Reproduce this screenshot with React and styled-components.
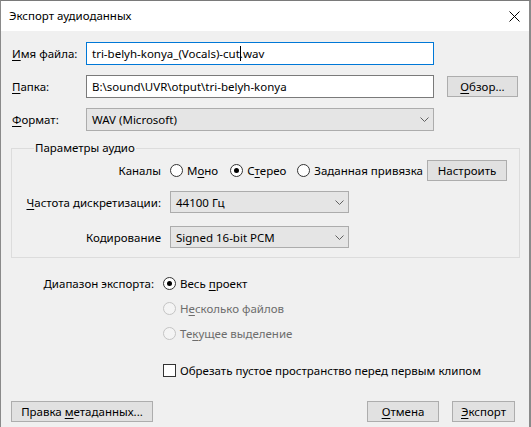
import React from 'react'
import styled, { createGlobalStyle } from 'styled-components'

const GlobalStyle = createGlobalStyle`
  html, body {
    margin: 0;
    padding: 0;
    background: #4a4a4a;
  }
`;

const uiFont = `"Noto Sans", "Open Sans", sans-serif`;

const Window = styled.div`
  box-sizing: border-box;
  width: 531px;
  height: 427px;
  display: flex;
  flex-direction: column;
  background: #f0f0f0;
  border-top: 1px solid #7a7a7a;
  border-left: 1px solid #8a8a8a;
  border-right: 2px solid #8a8a8a;
  font-family: ${uiFont};
  font-size: 11.5px;
  color: #000;
  overflow: hidden;
`;

const TitleBar = styled.div`
  height: 30px;
  flex: none;
  display: flex;
  align-items: center;
  justify-content: space-between;
  padding: 0 9px 0 8px;
  background: #fff;
`;

const Title = styled.span`
  font-size: 11.5px;
  line-height: 16px;
`;

const Content = styled.div`
  flex: 1;
  display: flex;
  flex-direction: column;
  padding: 11px 9px 5px 10px;
`;

const FieldRow = styled.div`
  display: grid;
  grid-template-columns: 62px 348px 71px;
  column-gap: 13px;
  align-items: center;
  height: 23px;
  margin-bottom: 10px;
`;

const Label = styled.span`
  padding-left: 1px;
  white-space: nowrap;
`;

const Key = styled.u`
  text-decoration-thickness: 1px;
  text-underline-offset: 2px;
`;

const TextBox = styled.div`
  box-sizing: border-box;
  height: 23px;
  display: flex;
  align-items: center;
  padding: 0 5px;
  background: #fff;
  border: 1px solid ${p => (p.$focused ? '#0078d7' : '#7a7a7a')};
  white-space: nowrap;
`;

const Caret = styled.span`
  display: inline-block;
  width: 1px;
  height: 15px;
  margin: 0 -1px 0 0;
  background: #000;
  vertical-align: middle;
`;

const Combo = styled.div`
  box-sizing: border-box;
  width: ${p => p.$width || 'auto'};
  height: ${p => p.$height || '23px'};
  margin-top: ${p => p.$top || '0'};
  display: flex;
  align-items: center;
  justify-content: space-between;
  padding: 0 4px 0 5px;
  background: #e5e5e5;
  border: 1px solid #acacac;
  white-space: nowrap;
`;

const Chevron = () => (
  <svg width="9" height="5" viewBox="0 0 9 5">
    <path d="M0.5 0.5 L4.5 4.5 L8.5 0.5" fill="none" stroke="#606060" strokeWidth="1" />
  </svg>
);

const Button = styled.button`
  box-sizing: border-box;
  width: ${p => p.$width};
  height: 21px;
  padding: 0;
  background: #e1e1e1;
  border: 1px solid #adadad;
  font-family: ${uiFont};
  font-size: 11.5px;
  color: #000;
  white-space: nowrap;
`;

const GroupBox = styled.fieldset`
  margin: -1px 0 0 0;
  padding: 3px 12px 9px 15px;
  border: 1px solid #dcdcdc;
  min-width: 0;
`;

const Legend = styled.legend`
  padding: 0 1px;
  margin-left: 7px;
  line-height: 16px;
`;

const GroupGrid = styled.div`
  display: grid;
  grid-template-columns: 134px minmax(0, 1fr);
  column-gap: 9px;
  row-gap: 10px;
  align-items: center;
  justify-items: start;
`;

const RightLabel = styled.span`
  justify-self: end;
  white-space: nowrap;
  margin-top: ${p => p.$top || '0'};
`;

const ChannelRow = styled.div`
  justify-self: stretch;
  display: flex;
  align-items: center;
  height: 22px;
`;

const RadioItem = styled.span`
  display: inline-flex;
  align-items: center;
  gap: 4px;
  margin-right: ${p => p.$gap || '0'};
  white-space: nowrap;
  color: ${p => (p.$disabled ? '#6d6d6d' : '#000')};
`;

const Circle = styled.span`
  box-sizing: border-box;
  width: 13px;
  height: 13px;
  border-radius: 50%;
  border: 1px solid ${p => (p.$disabled ? '#c4c4c4' : '#333')};
  background: ${p => (p.$disabled ? '#f4f4f4' : '#fff')};
  display: flex;
  align-items: center;
  justify-content: center;

  &::after {
    content: '';
    display: ${p => (p.$checked ? 'block' : 'none')};
    width: 5px;
    height: 5px;
    border-radius: 50%;
    background: #000;
  }
`;

const Radio = ({ checked, disabled, gap, children }) => (
  <RadioItem $disabled={disabled} $gap={gap}>
    <Circle $checked={checked} $disabled={disabled} />
    <span>{children}</span>
  </RadioItem>
);

const Spacer = styled.span`
  flex: 1;
`;

const RangeGrid = styled.div`
  display: grid;
  grid-template-columns: 143px auto;
  column-gap: 9px;
  row-gap: 6px;
  align-items: center;
  justify-items: start;
  margin-top: 16px;
`;

const RadioCell = styled.div`
  grid-column: 2;
  height: 19px;
  display: flex;
  align-items: center;
`;

const CheckRow = styled.div`
  grid-column: 2;
  display: flex;
  align-items: center;
  gap: 4px;
  margin-top: 14px;
  white-space: nowrap;
`;

const CheckBox = styled.span`
  box-sizing: border-box;
  width: 13px;
  height: 13px;
  border: 1px solid #333;
  background: #fff;
`;

const Footer = styled.div`
  margin-top: auto;
  display: flex;
  align-items: center;
  padding-right: 5px;
`;

const ButtonGroup = styled.div`
  display: flex;
  gap: 13px;
  margin-left: auto;
`;

export default function App() {
  return (
    <>
      <GlobalStyle />
      <Window>
        <TitleBar>
          <Title>Экспорт аудиоданных</Title>
          <svg width="11" height="11" viewBox="0 0 11 11">
            <path d="M0.5 0.5 L10.5 10.5 M10.5 0.5 L0.5 10.5" stroke="#000" strokeWidth="1" />
          </svg>
        </TitleBar>

        <Content>
          <FieldRow>
            <Label><Key>И</Key>мя файла:</Label>
            <TextBox $focused>
              tri-belyh-konya_(Vocals)-cut<Caret />.wav
            </TextBox>
          </FieldRow>
          <FieldRow>
            <Label><Key>П</Key>апка:</Label>
            <TextBox>B:\sound\UVR\otput\tri-belyh-konya</TextBox>
            <Button $width="71px"><Key>О</Key>бзор...</Button>
          </FieldRow>
          <FieldRow>
            <Label><Key>Ф</Key>ормат:</Label>
            <Combo>
              <span>WAV (Microsoft)</span>
              <Chevron />
            </Combo>
          </FieldRow>

          <GroupBox>
            <Legend>Параметры аудио</Legend>
            <GroupGrid>
              <RightLabel>Каналы</RightLabel>
              <ChannelRow>
                <Radio gap="12px">М<Key>о</Key>но</Radio>
                <Radio checked gap="11px">С<Key>т</Key>ерео</Radio>
                <Radio>Заданная привязка</Radio>
                <Spacer />
                <Button $width="80px">Настроить</Button>
              </ChannelRow>

              <RightLabel><Key>Ч</Key>астота дискретизации:</RightLabel>
              <Combo $width="179px" $height="22px">
                <span>44100 Гц</span>
                <Chevron />
              </Combo>

              <RightLabel $top="3px">Кодирование</RightLabel>
              <Combo $width="179px" $height="22px" $top="3px">
                <span>Signed 16-bit PCM</span>
                <Chevron />
              </Combo>
            </GroupGrid>
          </GroupBox>

          <RangeGrid>
            <RightLabel>Диапазон экспорта:</RightLabel>
            <RadioCell>
              <Radio checked>Весь <Key>п</Key>роект</Radio>
            </RadioCell>
            <RadioCell>
              <Radio disabled>Н<Key>е</Key>сколько файлов</Radio>
            </RadioCell>
            <RadioCell>
              <Radio disabled>Те<Key>к</Key>ущее выделение</Radio>
            </RadioCell>
            <CheckRow>
              <CheckBox />
              <span>Обрезать пустое пространство перед первым клипом</span>
            </CheckRow>
          </RangeGrid>

          <Footer>
            <Button $width="142px">Правка <Key>м</Key>етаданных...</Button>
            <ButtonGroup>
              <Button $width="72px"><Key>О</Key>тмена</Button>
              <Button $width="63px"><Key>Э</Key>кспорт</Button>
            </ButtonGroup>
          </Footer>
        </Content>
      </Window>
    </>
  )
}
